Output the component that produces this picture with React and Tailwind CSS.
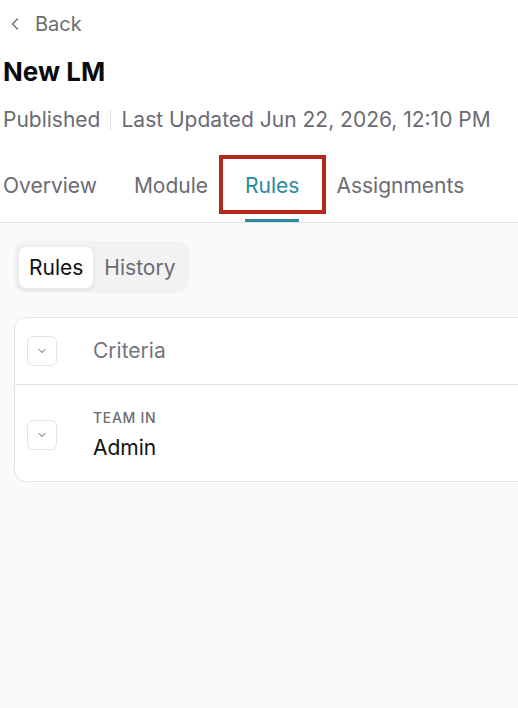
import React from "react";
import { ChevronLeft, ChevronDown } from "lucide-react";

const tabs = ["Overview", "Module", "Rules", "Assignments"];

const RuleRow = ({ label, value, muted }) => (
  <div className="flex items-center pl-3">
    <button className="w-[30px] h-[30px] shrink-0 flex items-center justify-center rounded-md border border-[#e4e4e7] bg-white text-[#52525b]">
      <ChevronDown size={12} strokeWidth={2} />
    </button>
    <div className="ml-9">
      {label && (
        <div className="text-[14px] leading-5 font-medium tracking-wider uppercase text-[#6b6b73] mb-[6px]">
          {label}
        </div>
      )}
      <div className={`text-[21px] leading-7 ${muted ? "text-[#75757d]" : "text-[#111]"}`}>{value}</div>
    </div>
  </div>
);

const App = () => {
  return (
    <div className="w-[518px] h-[708px] overflow-hidden bg-[#fafafa] font-['Inter',sans-serif]">
      <div className="bg-white pl-[3px]">
        <div className="pt-[10px] flex items-center h-[38px] text-[#6b6b73]">
          <ChevronLeft size={20} strokeWidth={1.6} className="ml-[2px]" />
          <span className="ml-[10px] text-[20px] leading-7">Back</span>
        </div>
        <h1 className="mt-[18px] text-[26px] leading-8 font-bold text-[#0a0a0a]">New LM</h1>
        <div className="mt-[18px] flex items-center text-[21px] leading-7 text-[#6b6b73] whitespace-nowrap">
          <span>Published</span>
          <span className="mx-[10px] w-px h-[20px] bg-[#e0e0e3]" />
          <span>Last Updated Jun 22, 2026, 12:10 PM</span>
        </div>
        <div className="mt-[38px] flex gap-[37px] whitespace-nowrap">
          {tabs.map((t) => {
            const active = t === "Rules";
            return (
              <div key={t} className="relative pb-[22px]">
                <span className={`text-[21px] leading-7 ${active ? "text-[#2a8aa0]" : "text-[#6b6b73]"}`}>{t}</span>
                {active && (
                  <>
                    <div className="absolute left-0 right-0 bottom-0 h-[3px] bg-[#2a8aa0]" />
                    <div className="absolute -left-[26px] -right-[27px] -top-[17px] bottom-[8px] border-4 border-[#b5271c]" />
                  </>
                )}
              </div>
            );
          })}
        </div>
      </div>
      <div className="border-t border-[#e4e4e7]" />

      <div className="pl-[14px]">
        <div className="mt-[18px] inline-flex p-[4px] pt-[5px] rounded-xl bg-[#f2f2f3]">
          <button className="h-[43px] px-[10px] rounded-lg bg-white shadow-[0_1px_3px_rgba(0,0,0,0.08)] border border-[#ececee] text-[21px] text-[#111]">
            Rules
          </button>
          <button className="h-[43px] px-[10px] text-[21px] text-[#6b6b73]">History</button>
        </div>

        <div className="mt-[24px] w-[560px] bg-white border border-[#e4e4e7] rounded-xl">
          <div className="h-[66px] flex items-center">
            <div className="w-full"><RuleRow value="Criteria" muted /></div>
          </div>
          <div className="border-t border-[#e4e4e7] pt-[23px] pb-[19px]">
            <RuleRow label="Team in" value="Admin" />
          </div>
        </div>
      </div>
    </div>
  );
};

export default App;
